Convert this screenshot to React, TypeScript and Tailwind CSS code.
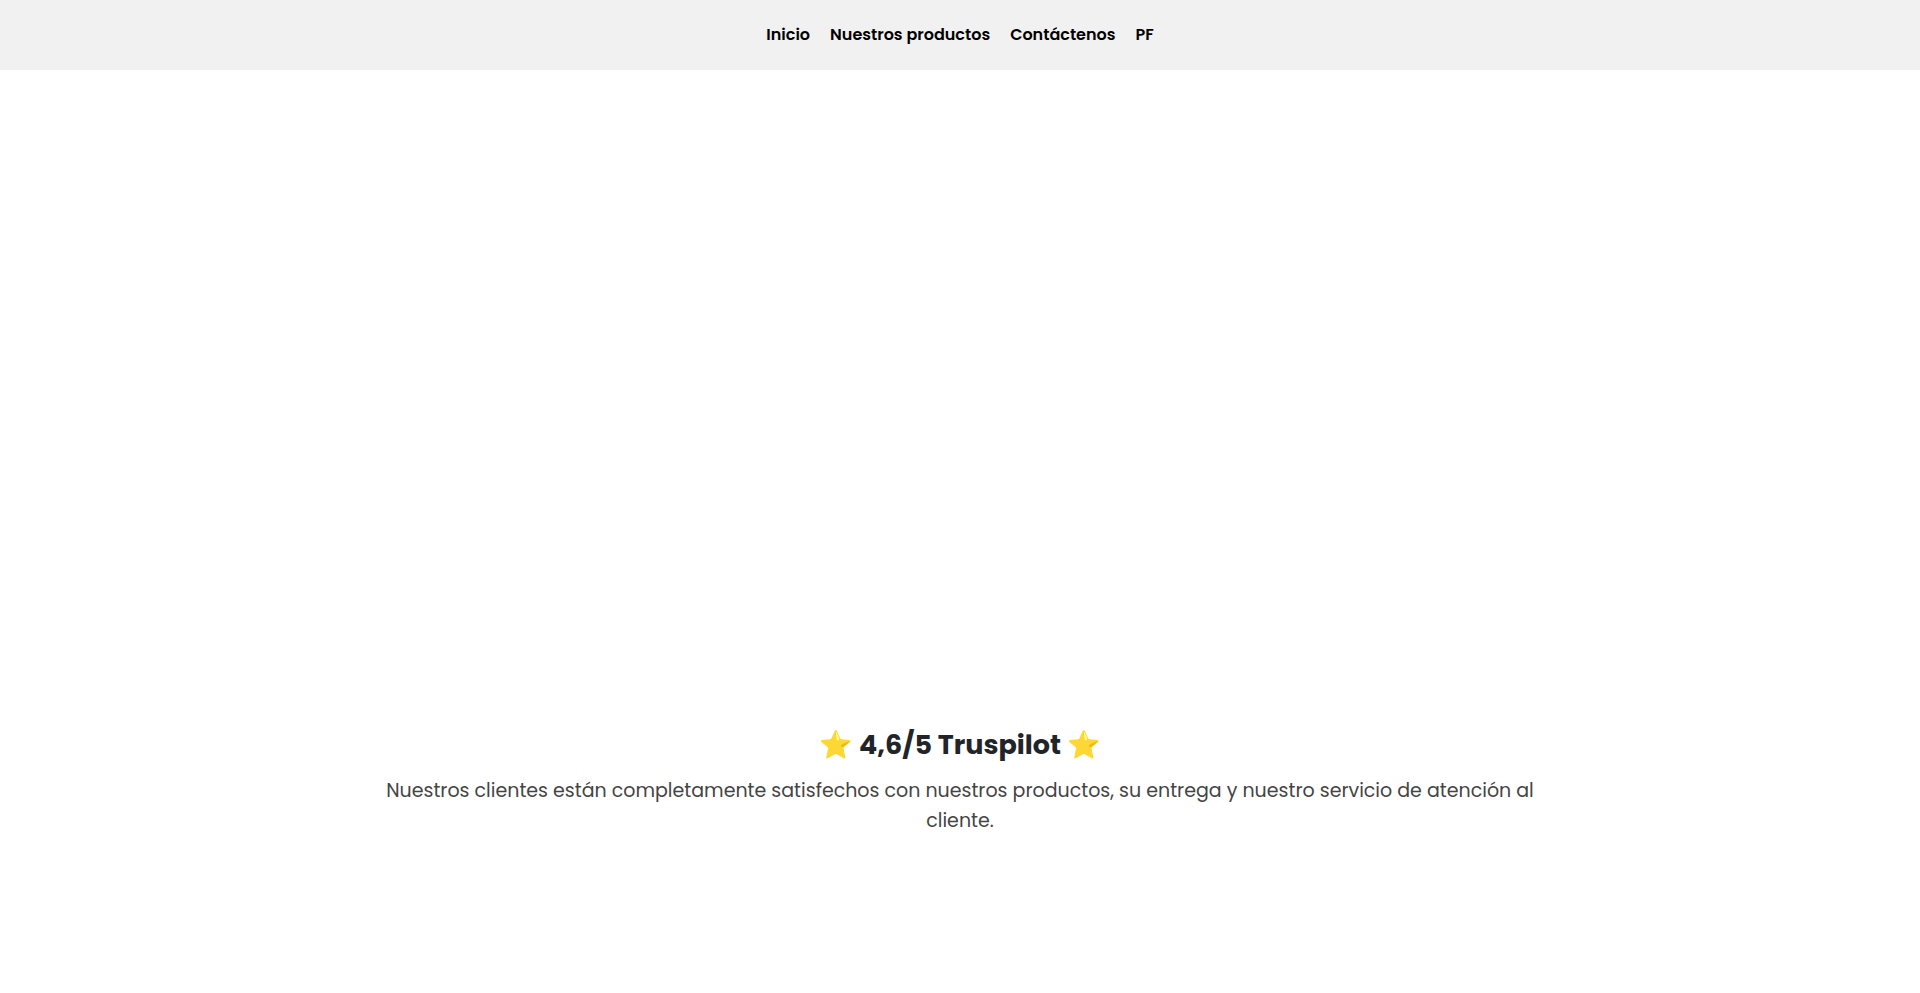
const links = [
  { label: "Inicio", href: "#inicio" },
  { label: "Nuestros productos", href: "#productos" },
  { label: "Contáctenos", href: "#contacto" },
  { label: "PF", href: "#pf" },
];

export default function App() {
  return (
    <div className="min-h-screen bg-white font-['Poppins',Inter,sans-serif]">
      <header className="bg-[#f1f1f1] p-5">
        <nav aria-label="Principal">
          <ul className="flex flex-wrap justify-center gap-5 leading-[30px]">
            {links.map((link) => (
              <li key={link.href}>
                <a href={link.href} className="text-base font-semibold text-black hover:underline">
                  {link.label}
                </a>
              </li>
            ))}
          </ul>
        </nav>
      </header>
      <main className="pt-[655px]">
        <section className="mx-auto max-w-[1200px] px-2 text-center">
          <h2 className="text-[27px] leading-10 font-bold text-[#212529]">⭐ 4,6/5 Truspilot ⭐</h2>
          <p className="mt-[11px] text-[19px] leading-[30px] text-[#444444]">
            Nuestros clientes están completamente satisfechos con nuestros productos, su entrega y
            nuestro servicio de atención al cliente.
          </p>
        </section>
      </main>
    </div>
  );
}
